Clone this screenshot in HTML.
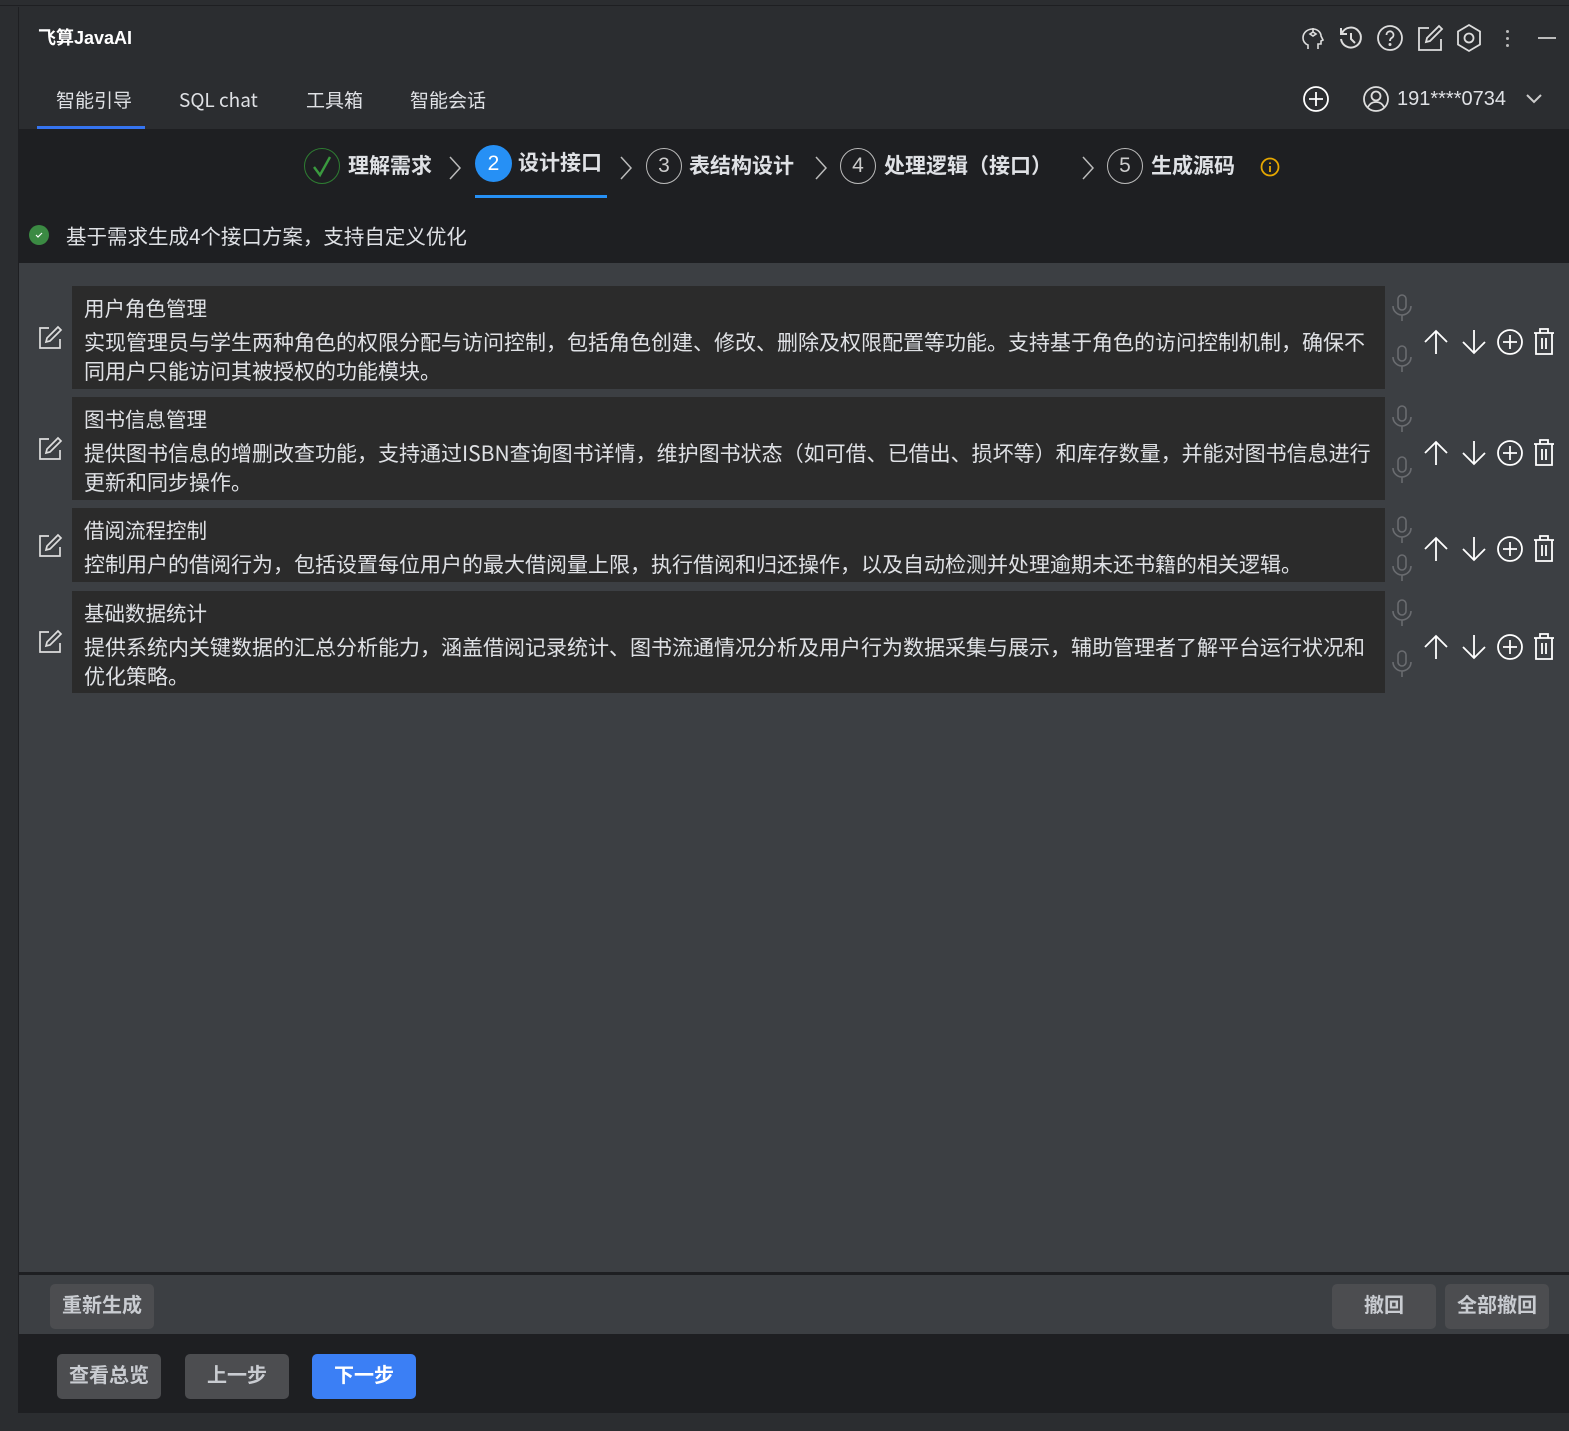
<!DOCTYPE html>
<html><head><meta charset="utf-8">
<style>
*{margin:0;padding:0;box-sizing:border-box}
body{width:1569px;height:1431px;background:#2b2d30;position:relative;overflow:hidden;font-family:"Liberation Sans","Noto Sans CJK SC",sans-serif;color:#dfe1e5}
.a{position:absolute}
.t{white-space:nowrap}
svg{position:absolute;overflow:visible}
.card{position:absolute;left:72px;width:1313px;background:#2b2b2b}
.card .h{position:absolute;left:12px;top:6px;font-size:20.5px;color:#dfe1e5;white-space:nowrap;font-family:"Noto Sans CJK SC",sans-serif}
.card .b{position:absolute;left:12px;top:42px;font-size:21px;line-height:29px;color:#dfe1e5;width:1294px;font-family:"Noto Sans CJK SC",sans-serif}
.btn{position:absolute;border-radius:5px;font-size:20px;font-weight:bold;color:#c9ccd1;text-align:center;background:#4c4d50}
.step{position:absolute;top:150px;font-size:21px;font-weight:bold;color:#dfe1e5;white-space:nowrap}
.circ{position:absolute;top:148px;width:36px;height:36px;border:1.5px solid #bbb;border-radius:50%;font-size:21px;color:#ccc;text-align:center;line-height:33px}
</style></head><body>
<div class="a" style="left:0;top:0;width:1569px;height:6px;background:#2b2d30;border-bottom:1px solid #1e1f22"></div>
<div class="a" style="left:18px;top:7px;width:1px;height:1406px;background:#1e1f22"></div>
<div class="a t" style="left:38px;top:27px;font-size:18px;font-weight:bold;color:#fff;line-height:22px">飞算JavaAI</div>
<svg style="left:1300px;top:25px" width="26" height="26" viewBox="0 0 26 26" fill="none" stroke="#ddd" stroke-width="1.6"><path d="M8 24v-4c-3-1-5-4-5-7 0-6 5-9 10-9 4 0 8 3 8 7l2 4-2 1v3h-3v5"/><path d="M13 3v4M10 9l3-2 3 2-3 2z"/></svg>
<svg style="left:1338px;top:25px" width="26" height="26" viewBox="0 0 26 26" fill="none" stroke="#ddd" stroke-width="2"><path d="M4 8A10 10 0 1 1 3 14"/><path d="M3 3v6h6M13 8v6l4 4"/></svg>
<svg style="left:1377px;top:25px" width="26" height="26" viewBox="0 0 26 26" fill="none" stroke="#ddd" stroke-width="1.8"><circle cx="13" cy="13" r="12"/><path d="M9.5 10a3.5 3.5 0 1 1 5 3c-1.5 1-1.5 2-1.5 3"/><circle cx="13" cy="19.5" r=".6" fill="#ddd"/></svg>
<svg style="left:1417px;top:25px" width="26" height="26" viewBox="0 0 26 26" fill="none" stroke="#ddd" stroke-width="1.8"><path d="M12 3H2v22h22V14"/><path d="M22 1l3 3-12 12-4 1 1-4z"/></svg>
<svg style="left:1456px;top:24px" width="26" height="28" viewBox="0 0 26 28" fill="none" stroke="#ddd" stroke-width="1.8"><path d="M13 1l11 6.5v13L13 27 2 20.5v-13z"/><circle cx="13" cy="14" r="4.5"/></svg>
<div class="a" style="left:1506px;top:30px;width:3px;height:3px;background:#bbb;border-radius:50%;box-shadow:0 7px 0 #bbb,0 14px 0 #bbb"></div>
<div class="a" style="left:1538px;top:37px;width:18px;height:2px;background:#bbb"></div>
<div class="a t" style="left:56px;top:87px;font-size:19px;color:#dfe1e5;font-family:'Noto Sans CJK SC',sans-serif;line-height:26px">智能引导</div>
<div class="a t" style="left:179px;top:87px;font-size:19px;color:#dfe1e5;font-family:'Noto Sans CJK SC',sans-serif;line-height:26px">SQL chat</div>
<div class="a t" style="left:306px;top:87px;font-size:19px;color:#dfe1e5;font-family:'Noto Sans CJK SC',sans-serif;line-height:26px">工具箱</div>
<div class="a t" style="left:410px;top:87px;font-size:19px;color:#dfe1e5;font-family:'Noto Sans CJK SC',sans-serif;line-height:26px">智能会话</div>
<div class="a" style="left:37px;top:126px;width:108px;height:3px;background:#3574f0"></div>
<svg style="left:1303px;top:86px" width="26" height="26" viewBox="0 0 26 26" fill="none" stroke="#fff" stroke-width="1.8"><circle cx="13" cy="13" r="12"/><path d="M13 6v14M6 13h14"/></svg>
<svg style="left:1363px;top:86px" width="26" height="26" viewBox="0 0 26 26" fill="none" stroke="#ddd" stroke-width="1.8"><circle cx="13" cy="13" r="12"/><circle cx="13" cy="10" r="4.5"/><path d="M5 21c2-4 5-5 8-5s6 1 8 5"/></svg>
<div class="a t" style="left:1397px;top:88px;font-size:20px;color:#dfe1e5">191****0734</div>
<svg style="left:1526px;top:94px" width="16" height="10" viewBox="0 0 16 10" fill="none" stroke="#ccc" stroke-width="2"><path d="M1 1l7 7 7-7"/></svg>
<div class="a" style="left:19px;top:129px;width:1550px;height:134px;background:#1e1f22"></div>
<div class="circ" style="left:304px;border-color:#2e7d32"></div>
<svg style="left:312px;top:155px" width="20" height="22" viewBox="0 0 20 22" fill="none" stroke="#3a9a3f" stroke-width="2.4"><path d="M2 12l6 8L18 2"/></svg>
<div class="step" style="left:348px">理解需求</div>
<svg style="left:449px;top:156px" width="12" height="24" viewBox="0 0 12 24" fill="none" stroke="#bbb" stroke-width="1.5"><path d="M1 1l10 11L1 23"/></svg>
<div class="a" style="left:475px;top:145px;width:37px;height:37px;border-radius:50%;background:#2690f5;color:#fff;font-size:21px;text-align:center;line-height:37px">2</div>
<div class="step" style="left:518px;top:147px">设计接口</div>
<div class="a" style="left:475px;top:195px;width:132px;height:3px;background:#2690f5"></div>
<svg style="left:620px;top:156px" width="12" height="24" viewBox="0 0 12 24" fill="none" stroke="#bbb" stroke-width="1.5"><path d="M1 1l10 11L1 23"/></svg>
<div class="circ" style="left:646px">3</div>
<div class="step" style="left:689px">表结构设计</div>
<svg style="left:815px;top:156px" width="12" height="24" viewBox="0 0 12 24" fill="none" stroke="#bbb" stroke-width="1.5"><path d="M1 1l10 11L1 23"/></svg>
<div class="circ" style="left:840px">4</div>
<div class="step" style="left:884px">处理逻辑（接口）</div>
<svg style="left:1082px;top:156px" width="12" height="24" viewBox="0 0 12 24" fill="none" stroke="#bbb" stroke-width="1.5"><path d="M1 1l10 11L1 23"/></svg>
<div class="circ" style="left:1107px">5</div>
<div class="step" style="left:1151px">生成源码</div>
<svg style="left:1260px;top:157px" width="20" height="20" viewBox="0 0 20 20" fill="none" stroke="#e6a700" stroke-width="1.8"><circle cx="10" cy="10" r="8.5"/><path d="M10 9v6M10 5.5v1.5"/></svg>
<div class="a" style="left:29px;top:225px;width:20px;height:20px;border-radius:50%;background:#3b8a43"></div>
<svg style="left:34px;top:230px" width="10" height="10" viewBox="0 0 10 10" fill="none" stroke="#fff" stroke-width="1.2"><path d="M2 5l2 2 4-4"/></svg>
<div class="a t" style="left:66px;top:220px;font-size:20.5px;color:#dfe1e5;font-family:'Noto Sans CJK SC',sans-serif;line-height:30px">基于需求生成4个接口方案，支持自定义优化</div>
<div class="a" style="left:19px;top:263px;width:1550px;height:1009px;background:#3c3f43"></div>
<div class="card" style="top:286px;height:103px"><div class="h">用户角色管理</div><div class="b">实现管理员与学生两种角色的权限分配与访问控制，包括角色创建、修改、删除及权限配置等功能。支持基于角色的访问控制机制，确保不同用户只能访问其被授权的功能模块。</div></div>
<div class="card" style="top:397px;height:103px"><div class="h">图书信息管理</div><div class="b">提供图书信息的增删改查功能，支持通过ISBN查询图书详情，维护图书状态（如可借、已借出、损坏等）和库存数量，并能对图书信息进行更新和同步操作。</div></div>
<div class="card" style="top:508px;height:74px"><div class="h">借阅流程控制</div><div class="b">控制用户的借阅行为，包括设置每位用户的最大借阅量上限，执行借阅和归还操作，以及自动检测并处理逾期未还书籍的相关逻辑。</div></div>
<div class="card" style="top:591px;height:102px"><div class="h">基础数据统计</div><div class="b">提供系统内关键数据的汇总分析能力，涵盖借阅记录统计、图书流通情况分析及用户行为数据采集与展示，辅助管理者了解平台运行状况和优化策略。</div></div>
<svg style="left:39px;top:326px" width="23" height="23" viewBox="0 0 23 23" fill="none" stroke="#ddd" stroke-width="1.7"><path d="M10 2H1v20h20v-9"/><path d="M19 1l3 3-11 11-4 1 1-4z"/></svg>
<svg style="left:39px;top:437px" width="23" height="23" viewBox="0 0 23 23" fill="none" stroke="#ddd" stroke-width="1.7"><path d="M10 2H1v20h20v-9"/><path d="M19 1l3 3-11 11-4 1 1-4z"/></svg>
<svg style="left:39px;top:534px" width="23" height="23" viewBox="0 0 23 23" fill="none" stroke="#ddd" stroke-width="1.7"><path d="M10 2H1v20h20v-9"/><path d="M19 1l3 3-11 11-4 1 1-4z"/></svg>
<svg style="left:39px;top:630px" width="23" height="23" viewBox="0 0 23 23" fill="none" stroke="#ddd" stroke-width="1.7"><path d="M10 2H1v20h20v-9"/><path d="M19 1l3 3-11 11-4 1 1-4z"/></svg>
<svg style="left:1392px;top:294px" width="20" height="28" viewBox="0 0 20 28" fill="none" stroke="#6a6c70" stroke-width="1.6"><rect x="6" y="1" width="8" height="15" rx="4"/><path d="M1 12a9 9 0 0 0 18 0M10 21v6"/></svg>
<svg style="left:1392px;top:345px" width="20" height="28" viewBox="0 0 20 28" fill="none" stroke="#6a6c70" stroke-width="1.6"><rect x="6" y="1" width="8" height="15" rx="4"/><path d="M1 12a9 9 0 0 0 18 0M10 21v6"/></svg>
<svg style="left:1392px;top:405px" width="20" height="28" viewBox="0 0 20 28" fill="none" stroke="#6a6c70" stroke-width="1.6"><rect x="6" y="1" width="8" height="15" rx="4"/><path d="M1 12a9 9 0 0 0 18 0M10 21v6"/></svg>
<svg style="left:1392px;top:456px" width="20" height="28" viewBox="0 0 20 28" fill="none" stroke="#6a6c70" stroke-width="1.6"><rect x="6" y="1" width="8" height="15" rx="4"/><path d="M1 12a9 9 0 0 0 18 0M10 21v6"/></svg>
<svg style="left:1392px;top:516px" width="20" height="28" viewBox="0 0 20 28" fill="none" stroke="#6a6c70" stroke-width="1.6"><rect x="6" y="1" width="8" height="15" rx="4"/><path d="M1 12a9 9 0 0 0 18 0M10 21v6"/></svg>
<svg style="left:1392px;top:554px" width="20" height="28" viewBox="0 0 20 28" fill="none" stroke="#6a6c70" stroke-width="1.6"><rect x="6" y="1" width="8" height="15" rx="4"/><path d="M1 12a9 9 0 0 0 18 0M10 21v6"/></svg>
<svg style="left:1392px;top:599px" width="20" height="28" viewBox="0 0 20 28" fill="none" stroke="#6a6c70" stroke-width="1.6"><rect x="6" y="1" width="8" height="15" rx="4"/><path d="M1 12a9 9 0 0 0 18 0M10 21v6"/></svg>
<svg style="left:1392px;top:650px" width="20" height="28" viewBox="0 0 20 28" fill="none" stroke="#6a6c70" stroke-width="1.6"><rect x="6" y="1" width="8" height="15" rx="4"/><path d="M1 12a9 9 0 0 0 18 0M10 21v6"/></svg>
<div class="a" style="left:0;top:329px">
<svg style="left:1424px;top:0" width="24" height="26" viewBox="0 0 24 26" fill="none" stroke="#fff" stroke-width="1.8"><path d="M12 25V2M1 13L12 2l11 11"/></svg>
<svg style="left:1462px;top:0" width="24" height="26" viewBox="0 0 24 26" fill="none" stroke="#fff" stroke-width="1.8"><path d="M12 1v23M1 13l11 11 11-11"/></svg>
<svg style="left:1497px;top:0" width="26" height="26" viewBox="0 0 26 26" fill="none" stroke="#fff" stroke-width="1.8"><circle cx="13" cy="13" r="12"/><path d="M13 6v14M6 13h14"/></svg>
<svg style="left:1533px;top:-1px" width="22" height="27" viewBox="0 0 22 27" fill="none" stroke="#fff" stroke-width="1.8"><path d="M1 5h20M7 5V1h8v4M3 5v21h16V5M9 10v11M13 10v11"/></svg>
</div>
<div class="a" style="left:0;top:440px">
<svg style="left:1424px;top:0" width="24" height="26" viewBox="0 0 24 26" fill="none" stroke="#fff" stroke-width="1.8"><path d="M12 25V2M1 13L12 2l11 11"/></svg>
<svg style="left:1462px;top:0" width="24" height="26" viewBox="0 0 24 26" fill="none" stroke="#fff" stroke-width="1.8"><path d="M12 1v23M1 13l11 11 11-11"/></svg>
<svg style="left:1497px;top:0" width="26" height="26" viewBox="0 0 26 26" fill="none" stroke="#fff" stroke-width="1.8"><circle cx="13" cy="13" r="12"/><path d="M13 6v14M6 13h14"/></svg>
<svg style="left:1533px;top:-1px" width="22" height="27" viewBox="0 0 22 27" fill="none" stroke="#fff" stroke-width="1.8"><path d="M1 5h20M7 5V1h8v4M3 5v21h16V5M9 10v11M13 10v11"/></svg>
</div>
<div class="a" style="left:0;top:536px">
<svg style="left:1424px;top:0" width="24" height="26" viewBox="0 0 24 26" fill="none" stroke="#fff" stroke-width="1.8"><path d="M12 25V2M1 13L12 2l11 11"/></svg>
<svg style="left:1462px;top:0" width="24" height="26" viewBox="0 0 24 26" fill="none" stroke="#fff" stroke-width="1.8"><path d="M12 1v23M1 13l11 11 11-11"/></svg>
<svg style="left:1497px;top:0" width="26" height="26" viewBox="0 0 26 26" fill="none" stroke="#fff" stroke-width="1.8"><circle cx="13" cy="13" r="12"/><path d="M13 6v14M6 13h14"/></svg>
<svg style="left:1533px;top:-1px" width="22" height="27" viewBox="0 0 22 27" fill="none" stroke="#fff" stroke-width="1.8"><path d="M1 5h20M7 5V1h8v4M3 5v21h16V5M9 10v11M13 10v11"/></svg>
</div>
<div class="a" style="left:0;top:634px">
<svg style="left:1424px;top:0" width="24" height="26" viewBox="0 0 24 26" fill="none" stroke="#fff" stroke-width="1.8"><path d="M12 25V2M1 13L12 2l11 11"/></svg>
<svg style="left:1462px;top:0" width="24" height="26" viewBox="0 0 24 26" fill="none" stroke="#fff" stroke-width="1.8"><path d="M12 1v23M1 13l11 11 11-11"/></svg>
<svg style="left:1497px;top:0" width="26" height="26" viewBox="0 0 26 26" fill="none" stroke="#fff" stroke-width="1.8"><circle cx="13" cy="13" r="12"/><path d="M13 6v14M6 13h14"/></svg>
<svg style="left:1533px;top:-1px" width="22" height="27" viewBox="0 0 22 27" fill="none" stroke="#fff" stroke-width="1.8"><path d="M1 5h20M7 5V1h8v4M3 5v21h16V5M9 10v11M13 10v11"/></svg>
</div>
<div class="a" style="left:19px;top:1272px;width:1550px;height:3px;background:#1e1f22"></div>
<div class="a" style="left:19px;top:1275px;width:1550px;height:59px;background:#3c3f43"></div>
<div class="btn" style="left:50px;top:1284px;width:104px;height:45px;line-height:45px">重新生成</div>
<div class="btn" style="left:1332px;top:1284px;width:104px;height:45px;line-height:45px">撤回</div>
<div class="btn" style="left:1445px;top:1284px;width:104px;height:45px;line-height:45px">全部撤回</div>
<div class="a" style="left:19px;top:1334px;width:1550px;height:79px;background:#1e1f22"></div>
<div class="btn" style="left:57px;top:1354px;width:104px;height:45px;line-height:45px">查看总览</div>
<div class="btn" style="left:185px;top:1354px;width:104px;height:45px;line-height:45px">上一步</div>
<div class="btn" style="left:312px;top:1354px;width:104px;height:45px;line-height:45px;background:#3b7ff5;color:#fff">下一步</div>
</body></html>
